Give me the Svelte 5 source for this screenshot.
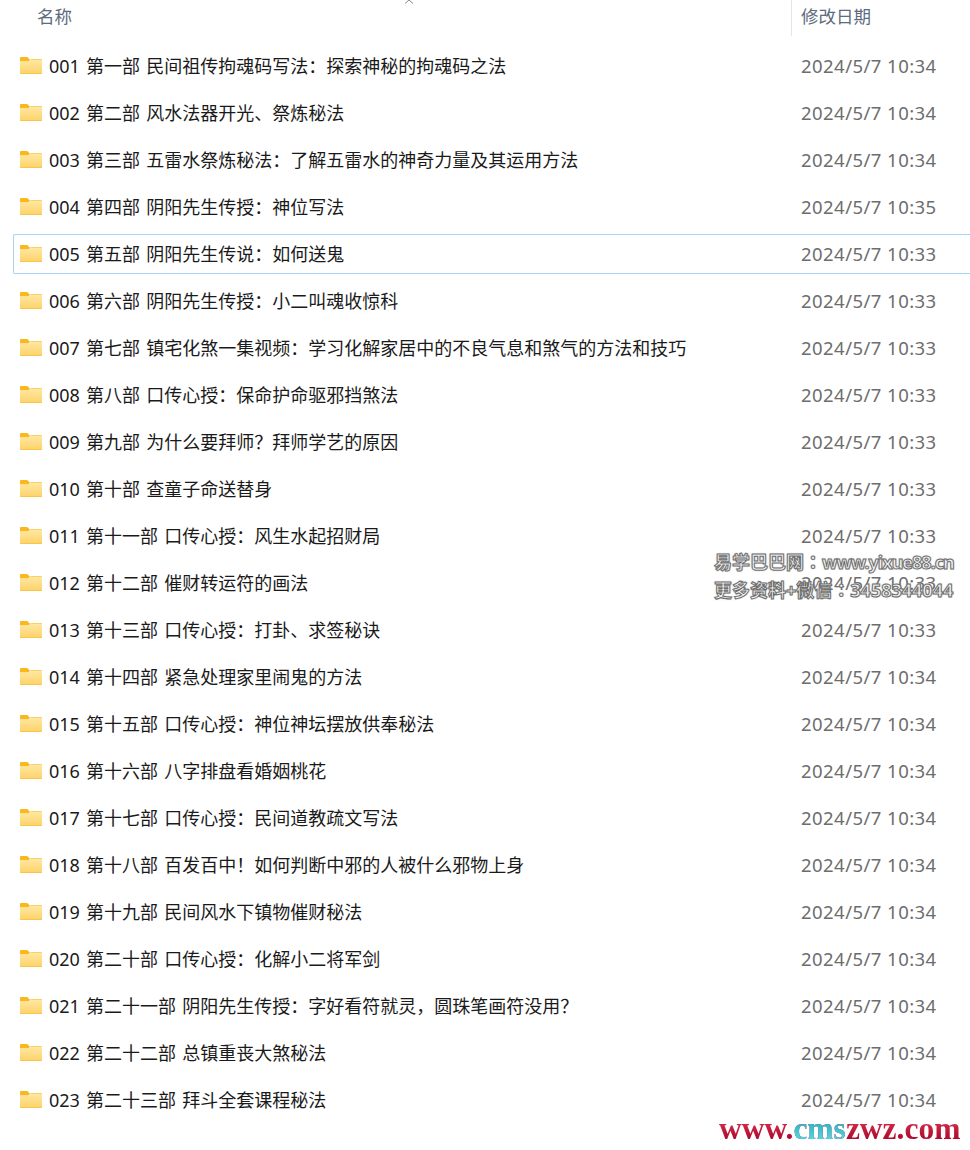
<script lang="ts">
	const files = [
		['001 第一部 民间祖传拘魂码写法：探索神秘的拘魂码之法', '2024/5/7 10:34'],
		['002 第二部 风水法器开光、祭炼秘法', '2024/5/7 10:34'],
		['003 第三部 五雷水祭炼秘法：了解五雷水的神奇力量及其运用方法', '2024/5/7 10:34'],
		['004 第四部 阴阳先生传授：神位写法', '2024/5/7 10:35'],
		['005 第五部 阴阳先生传说：如何送鬼', '2024/5/7 10:33'],
		['006 第六部 阴阳先生传授：小二叫魂收惊科', '2024/5/7 10:33'],
		['007 第七部 镇宅化煞一集视频：学习化解家居中的不良气息和煞气的方法和技巧', '2024/5/7 10:33'],
		['008 第八部 口传心授：保命护命驱邪挡煞法', '2024/5/7 10:33'],
		['009 第九部 为什么要拜师？拜师学艺的原因', '2024/5/7 10:33'],
		['010 第十部 查童子命送替身', '2024/5/7 10:33'],
		['011 第十一部 口传心授：风生水起招财局', '2024/5/7 10:33'],
		['012 第十二部 催财转运符的画法', '2024/5/7 10:33'],
		['013 第十三部 口传心授：打卦、求签秘诀', '2024/5/7 10:33'],
		['014 第十四部 紧急处理家里闹鬼的方法', '2024/5/7 10:34'],
		['015 第十五部 口传心授：神位神坛摆放供奉秘法', '2024/5/7 10:34'],
		['016 第十六部 八字排盘看婚姻桃花', '2024/5/7 10:34'],
		['017 第十七部 口传心授：民间道教疏文写法', '2024/5/7 10:34'],
		['018 第十八部 百发百中！如何判断中邪的人被什么邪物上身', '2024/5/7 10:34'],
		['019 第十九部 民间风水下镇物催财秘法', '2024/5/7 10:34'],
		['020 第二十部 口传心授：化解小二将军剑', '2024/5/7 10:34'],
		['021 第二十一部 阴阳先生传授：字好看符就灵，圆珠笔画符没用？', '2024/5/7 10:34'],
		['022 第二十二部 总镇重丧大煞秘法', '2024/5/7 10:34'],
		['023 第二十三部 拜斗全套课程秘法', '2024/5/7 10:34'],
	];
	const selected = 4;
</script>

<div class="page">
	<div class="header">
		<div class="col-name">名称</div>
		<div class="col-date">修改日期</div>
		<svg class="sort" width="10" height="4" viewBox="0 0 10 4"><path d="M1 3.5 5 0l4 3.5" fill="none" stroke="#8a8a8a" /></svg>
	</div>

	<div class="list">
		{#each files as file, i}
			<div class="row" class:selected={i === selected}>
				<svg class="folder" width="24" height="19" viewBox="0 0 24 19">
					<defs>
						<linearGradient id="fold{i}" x1="0" y1="0" x2="0" y2="1">
							<stop offset="0" stop-color="#ffe9a6" />
							<stop offset="1" stop-color="#fdd268" />
						</linearGradient>
					</defs>
					<path d="M1 2.2C1 1.5 1.5 1 2.2 1h6l2.6 2.4v2H1z" fill="#f9b81c" />
					<path d="M1 5.4h8l3-2.4h10.2c.5 0 .8.4.8.8v13.4c0 .5-.4.8-.8.8H1.8c-.5 0-.8-.3-.8-.8z" fill="url(#fold{i})" />
					<path d="M1 17.6h22v.2c0 .2-.3.2-.8.2H1.8c-.5 0-.8 0-.8-.4zM12 3h10.4c.3 0 .6.2.6.6H11.4z" fill="#f4b52a" />
				</svg>
				<span class="name">{file[0]}</span>
				<span class="date">{file[1]}</span>
			</div>
		{/each}
	</div>

	<div class="mark">
		<div>易学巴巴网：<span class="latin">www.yixue88.cn</span></div>
		<div>更多资料+微信：3458344044</div>
	</div>
	<div class="site">www.<span class="cms">cms</span>zwz.com</div>
</div>

<style>
	:global(body) {
		margin: 0;
		background: #ffffff;
	}

	.page {
		position: relative;
		width: 970px;
		height: 1150px;
		overflow: hidden;
		font-family: 'Noto Sans', 'Noto Sans CJK SC', sans-serif;
		font-size: 18px;
	}

	.header {
		display: flex;
		height: 36px;
		margin-bottom: 10px;
		color: #5c6b7d;
		font-size: 17.5px;
		line-height: 33px;
	}

	.col-name {
		width: 754px;
		padding-left: 37px;
		border-right: 1px solid #e5e5e5;
	}

	.col-date {
		padding-left: 9px;
	}

	.sort {
		position: absolute;
		left: 404px;
		top: 0;
	}

	.list {
		display: flex;
		flex-direction: column;
		gap: 7px;
		padding-left: 13px;
	}

	.row {
		display: flex;
		align-items: center;
		height: 40px;
		box-sizing: border-box;
		border: 1px solid transparent;
		border-right: 0;
		padding-left: 5px;
	}

	.row.selected {
		border-color: #a9d5f5;
		border-radius: 2px 0 0 2px;
	}

	.folder {
		flex-shrink: 0;
		margin-right: 6px;
		margin-top: -1px;
	}

	.name {
		width: 752px;
		margin-top: -2px;
		color: #1a1a1a;
		white-space: nowrap;
		word-spacing: 1.5px;
	}

	.date {
		margin-top: -2px;
		color: #6d6d6d;
		font-size: 18.5px;
		letter-spacing: 0.45px;
		white-space: nowrap;
	}

	.mark {
		position: absolute;
		left: 714px;
		top: 548px;
		color: #f4f4f4;
		font-family: 'Noto Sans', 'Noto Sans CJK TC', sans-serif;
		font-size: 18px;
		font-weight: 700;
		line-height: 28px;
		white-space: nowrap;
		-webkit-text-stroke: 1px #6e6e6e;
		text-shadow: 0 0 2px #9a9a9a;
	}

	.latin {
		letter-spacing: -1px;
	}

	.site {
		position: absolute;
		left: 719px;
		top: 1113px;
		font-family: 'Liberation Serif', serif;
		font-size: 31.5px;
		font-weight: 700;
		line-height: 32px;
		white-space: nowrap;
		color: transparent;
		background: linear-gradient(#ee3a58, #9c0024);
		-webkit-background-clip: text;
		background-clip: text;
	}

	.cms {
		background: linear-gradient(#0a9fb8, #66e2ea);
		-webkit-background-clip: text;
		background-clip: text;
	}
</style>
